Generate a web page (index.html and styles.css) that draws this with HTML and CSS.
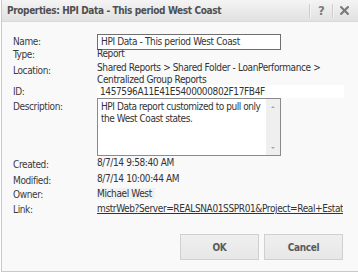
FILE: index.html
```html
<!DOCTYPE html>
<html>
<head>
<meta charset="utf-8">
<link rel="stylesheet" href="styles.css">
</head>
<body>
<div class="dialog">
  <div class="titlebar">
    <span class="title">Properties: HPI Data - This period West Coast</span>
    <span class="tools">
      <span class="sep"></span>
      <span class="tool help">?</span>
      <span class="sep"></span>
      <span class="tool close">
        <svg width="9" height="9" viewBox="0 0 9 9"><path d="M1.2 1.2 L7.8 7.8 M7.8 1.2 L1.2 7.8" stroke="#7a7a7a" stroke-width="2.2" stroke-linecap="square"/></svg>
      </span>
    </span>
  </div>
  <div class="body">
    <div class="row r-name"><span class="label">Name:</span><div class="value"><div class="input">HPI Data - This period West Coast</div></div></div>
    <div class="row r-type"><span class="label">Type:</span><div class="value">Report</div></div>
    <div class="row r-loc"><span class="label">Location:</span><div class="value">Shared Reports &gt; Shared Folder - LoanPerformance &gt;<br>Centralized Group Reports</div></div>
    <div class="row r-id"><span class="label">ID:</span><div class="value idbox">1457596A11E41E5400000802F17FB4F</div></div>
    <div class="row r-desc"><span class="label">Description:</span><div class="value"><div class="textarea"><div class="ta-text">HPI Data report customized to pull only the West Coast states.</div><div class="scroll"><span class="arr up"></span><span class="arr down"></span></div></div></div></div>
    <div class="row r-created"><span class="label">Created:</span><div class="value">8/7/14 9:58:40 AM</div></div>
    <div class="row r-mod"><span class="label">Modified:</span><div class="value">8/7/14 10:00:44 AM</div></div>
    <div class="row r-owner"><span class="label">Owner:</span><div class="value"><span class="owner">Michael West</span></div></div>
    <div class="row r-link"><span class="label">Link:</span><div class="value link">mstrWeb?Server=REALSNA01SSPR01&amp;Project=Real+Estate</div></div>
    <div class="buttons">
      <div class="btn">OK</div>
      <div class="btn">Cancel</div>
    </div>
  </div>
</div>
</body>
</html>
```
FILE: styles.css
```css
html, body {
  margin: 0;
  padding: 0;
  background: #ffffff;
}
body {
  width: 358px;
  height: 273px;
  overflow: hidden;
  font-family: "DejaVu Sans Condensed", "DejaVu Sans", sans-serif;
  font-size: 10px;
  letter-spacing: -0.38px;
  color: #333;
}
.dialog {
  margin-left: 1px;
  width: 357px;
  height: 272px;
  border-left: 1px solid #c9c9c9;
  border-bottom: 1px solid #c9c9c9;
  background: #f9f9f9;
  box-sizing: border-box;
  display: flex;
  flex-direction: column;
}
.titlebar {
  height: 22px;
  flex: none;
  box-sizing: border-box;
  background: linear-gradient(#f4f4f4, #e1e1e1);
  border-bottom: 1px solid #d9d9d9;
  display: flex;
  align-items: center;
  justify-content: space-between;
  padding-left: 5px;
}
.title {
  font-weight: bold;
  font-size: 10px;
  color: #505050;
}
.tools {
  display: flex;
  align-items: center;
  height: 100%;
  padding-right: 3px;
}
.sep {
  width: 1px;
  height: 14px;
  background: #cdcdcd;
  border-right: 1px solid #f4f4f4;
}
.tool {
  width: 21px;
  display: flex;
  justify-content: center;
  align-items: center;
  color: #7a7a7a;
  font-weight: bold;
  font-size: 13px;
  letter-spacing: 0;
}
.body {
  flex: 1;
  padding: 12px 0 0 11px;
  display: flex;
  flex-direction: column;
}
.row {
  display: grid;
  grid-template-columns: 84px 1fr;
  line-height: 12px;
}
.label {
  color: #3a3a3a;
  padding-top: 1px;
}
.r-name .label { line-height: 16px; padding-top: 0; }
.input {
  width: 184px;
  height: 16px;
  box-sizing: border-box;
  border: 1px solid #6e6e6e;
  background: #fff;
  padding-left: 3px;
  line-height: 14px;
  white-space: nowrap;
}
.r-type { margin-top: -2px; }
.r-loc { margin-top: 1px; }
.r-loc .label { padding-top: 3px; }
.r-id { margin-top: -1px; }
.idbox {
  background: #fff;
  width: 247px;
  height: 13px;
  padding-left: 3px;
  box-sizing: border-box;
  line-height: 13px;
}
.r-desc .label { padding-top: 3px; }
.textarea {
  width: 184px;
  height: 58px;
  box-sizing: border-box;
  border: 1px solid #8a8a8a;
  background: #fff;
  display: flex;
}
.ta-text {
  flex: 1;
  padding: 2px 0 2px 3px;
  line-height: 12px;
  letter-spacing: -0.45px;
}
.scroll {
  width: 14px;
  flex: none;
  background: #efefef;
  display: flex;
  flex-direction: column;
  justify-content: space-between;
  align-items: center;
  padding: 7px 0 6px;
  box-sizing: border-box;
}
.arr {
  width: 0;
  height: 0;
  border-left: 2.5px solid transparent;
  border-right: 2.5px solid transparent;
}
.arr.up { border-bottom: 2.5px solid #a8a8a8; }
.arr.down { border-top: 2.5px solid #a8a8a8; }
.r-created, .r-owner, .r-link { line-height: 14px; }
.r-mod { line-height: 13px; }
.r-created .label, .r-mod .label { padding-top: 2px; }
.owner {
  background: #f1f1f1;
  padding-right: 3px;
}
.link {
  text-decoration: underline;
  white-space: nowrap;
  overflow: hidden;
  text-overflow: clip;
  width: 246px;
  color: #333;
}
.buttons {
  display: flex;
  justify-content: flex-end;
  gap: 5px;
  margin-top: auto;
  margin-bottom: 11px;
  margin-right: 15px;
}
.btn {
  width: 79px;
  height: 26px;
  box-sizing: border-box;
  border: 1px solid #d0d0d0;
  background: linear-gradient(#efefef, #e7e7e7);
  color: #5a5a5a;
  font-weight: bold;
  display: flex;
  align-items: center;
  justify-content: center;
}
```
